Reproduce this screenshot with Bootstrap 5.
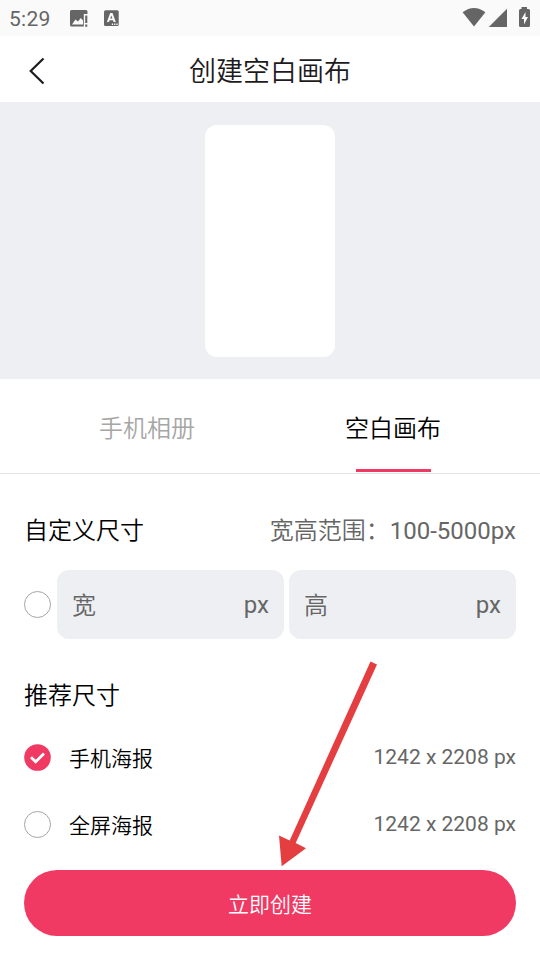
<!DOCTYPE html>
<html lang="zh-CN">
<head>
<meta charset="utf-8">
<meta name="viewport" content="width=device-width, initial-scale=1">
<title>创建空白画布</title>
<link href="https://cdn.jsdelivr.net/npm/bootstrap@5.3.0/dist/css/bootstrap.min.css" rel="stylesheet">
<style>
  body { font-family: Roboto, "Noto Sans CJK SC", sans-serif; font-size: 24px; line-height: 36px; color: #000; background: #fff; }
  .screen { width: 540px; height: 960px; }
  .statusbar { height: 36px; background: #fafafa; color: #656565; font-size: 21px; padding: 0 9px; }
  .clock { letter-spacing: .3px; width: 60px; padding-top: 2px; }
  .titlebar { height: 66px; }
  .titlebar h1 { font-size: 27px; line-height: 40px; color: #1d1a20; padding-top: 5px; }
  .titlebar h1, .tabs .nav-link, .section-title, .preset .name, .create, .cjk { font-weight: 350; }
  .back { left: 27px; top: 20px; }
  .preview { height: 277px; background: #edeff3; }
  .canvas-sheet { width: 130px; height: 232px; border-radius: 12px; }
  .tabs { height: 95px; border-bottom: 1px solid #e3e3e5; padding: 0 24px; }
  .tabs .nav-link { color: #a6a6a6; padding: 32px 0 0; height: 94px; }
  .tabs .nav-link:hover { color: #a6a6a6; }
  .tabs .nav-link.active { color: #000; }
  .tabs .nav-link.active::after { content: ""; display: block; width: 75px; height: 3px; margin: 22px auto 0; background: #ef3963; }
  .content { padding: 39px 24px 0; }
  .section-title { font-size: 24px; line-height: 36px; }
  .hint { color: #666; }
  .size-field { height: 69px; border-radius: 12px; background: #edeff3; padding: 0 15px; color: #666; }
  .size-field .cjk { padding-top: 2px; }
  .fields { gap: 5px; margin: 21px 0 39px; }
  .radio { width: 27px; height: 27px; border: 1px solid #a4a4a4; flex: none; }
  .radio.on { border: 0; }
  .fields .radio { margin-right: 1px; }
  .presets { padding-top: 10px; }
  .preset { height: 67px; font-size: 21px; }
  .preset .name { margin-left: 18px; padding-top: 2px; }
  .preset .hint { margin-top: -1px; }
  .create { height: 66px; margin: 12px 0 0; padding: 10px 0 4px; background: #f03963; color: #fff; font-size: 21px; }
  .create:hover { background: #f03963; color: #fff; }
  .pointer { left: 270px; top: 650px; }
</style>
<script src="https://cdn.jsdelivr.net/npm/bootstrap@5.3.0/dist/js/bootstrap.bundle.min.js"></script>
</head>
<body>
<div class="screen position-relative overflow-hidden">
  <div class="statusbar d-flex align-items-center">
    <span class="clock">5:29</span>
    <svg width="60" height="36" viewBox="69 0 60 36" fill="#656565">
      <path fill-rule="evenodd" d="M71.500 10H86q1.500 0 1.500 1.500V14h-3.700v12.500H71.500q-1.500 0-1.500-1.500V11.500q0-1.500 1.500-1.500zM72 24.500h11v-4l-2.200-2.500-2.800 3.500-2.500-2z"/>
      <path d="M85.200 15.500h2.100v7.500h-2.100zM85.200 24.500h2.100v2.300h-2.100z"/>
      <rect x="104" y="10.300" width="14.700" height="15.800" rx="1.500"/>
      <path fill="#fafafa" fill-rule="evenodd" d="M110.200 13h2.300l3.300 9h-2.200l-.6-1.800h-3.400l-.6 1.800h-2.100zM110.200 18.600h2.200l-1.100-3.200z"/>
      <path fill="#fafafa" d="M111.800 23.500h1.300v1.400h-1.300zM114.100 23.500h1.300v1.400h-1.300zM116.300 23.500h1.300v1.400h-1.300z"/>
    </svg>
    <svg class="ms-auto" width="78" height="36" viewBox="453 0 78 36" fill="#656565">
      <path d="M462.600 12.300Q474 3.700 485.400 12.300L474 26.600z"/>
      <path d="M507 8.800v18.200h-18.200z"/>
      <path fill-rule="evenodd" d="M521.500 7h5.500v2h1.500q1.500 0 1.500 1.500v15q0 1.500-1.500 1.500h-8q-1.500 0-1.500-1.500v-15q0-1.500 1.500-1.500h1zM525.500 12l-4 7h2.500v5.500l4-7.500h-2.500z"/>
    </svg>
  </div>
  <header class="titlebar position-relative d-flex align-items-center justify-content-center">
    <svg class="back position-absolute" width="20" height="30" viewBox="0 0 20 30" fill="none" stroke="#1d1a20" stroke-width="2.200"><path d="M16.500 2.500L3.700 15l12.800 12.500"/></svg>
    <h1 class="m-0">创建空白画布</h1>
  </header>
  <div class="preview d-flex align-items-center justify-content-center">
    <div class="canvas-sheet bg-white"></div>
  </div>
  <nav class="tabs nav nav-justified flex-nowrap">
    <a class="nav-link">手机相册</a>
    <a class="nav-link active">空白画布</a>
  </nav>
  <main class="content">
    <div class="d-flex justify-content-between">
      <h2 class="section-title m-0">自定义尺寸</h2>
      <span class="hint"><span class="cjk">宽高范围：</span>100-5000px</span>
    </div>
    <div class="fields d-flex align-items-center">
      <span class="radio rounded-circle"></span>
      <div class="size-field d-flex flex-fill align-items-center justify-content-between"><span class="cjk">宽</span><span>px</span></div>
      <div class="size-field d-flex flex-fill align-items-center justify-content-between"><span class="cjk">高</span><span>px</span></div>
    </div>
    <h2 class="section-title m-0">推荐尺寸</h2>
    <div class="presets">
      <div class="preset d-flex align-items-center">
        <svg class="radio on" viewBox="0 0 27 27"><circle cx="13.500" cy="13.500" r="13.300" fill="#f03963"/><path d="M7 13.200l4.700 4.600 8.300-8.300" fill="none" stroke="#fff" stroke-width="2.800"/></svg>
        <span class="name">手机海报</span><span class="hint ms-auto">1242 x 2208 px</span>
      </div>
      <div class="preset d-flex align-items-center">
        <span class="radio rounded-circle"></span>
        <span class="name">全屏海报</span><span class="hint ms-auto">1242 x 2208 px</span>
      </div>
    </div>
    <button type="button" class="create btn border-0 rounded-pill w-100">立即创建</button>
  </main>
  <svg class="pointer position-absolute" width="120" height="220" viewBox="270 650 120 220" fill="#e43e40"><path d="M370.500 661.600l6.500 2.900-81.300 178.500 10.300 5.200-24.300 18-2.700-30.700 10.700 4.900z"/></svg>
</div>
</body>
</html>
